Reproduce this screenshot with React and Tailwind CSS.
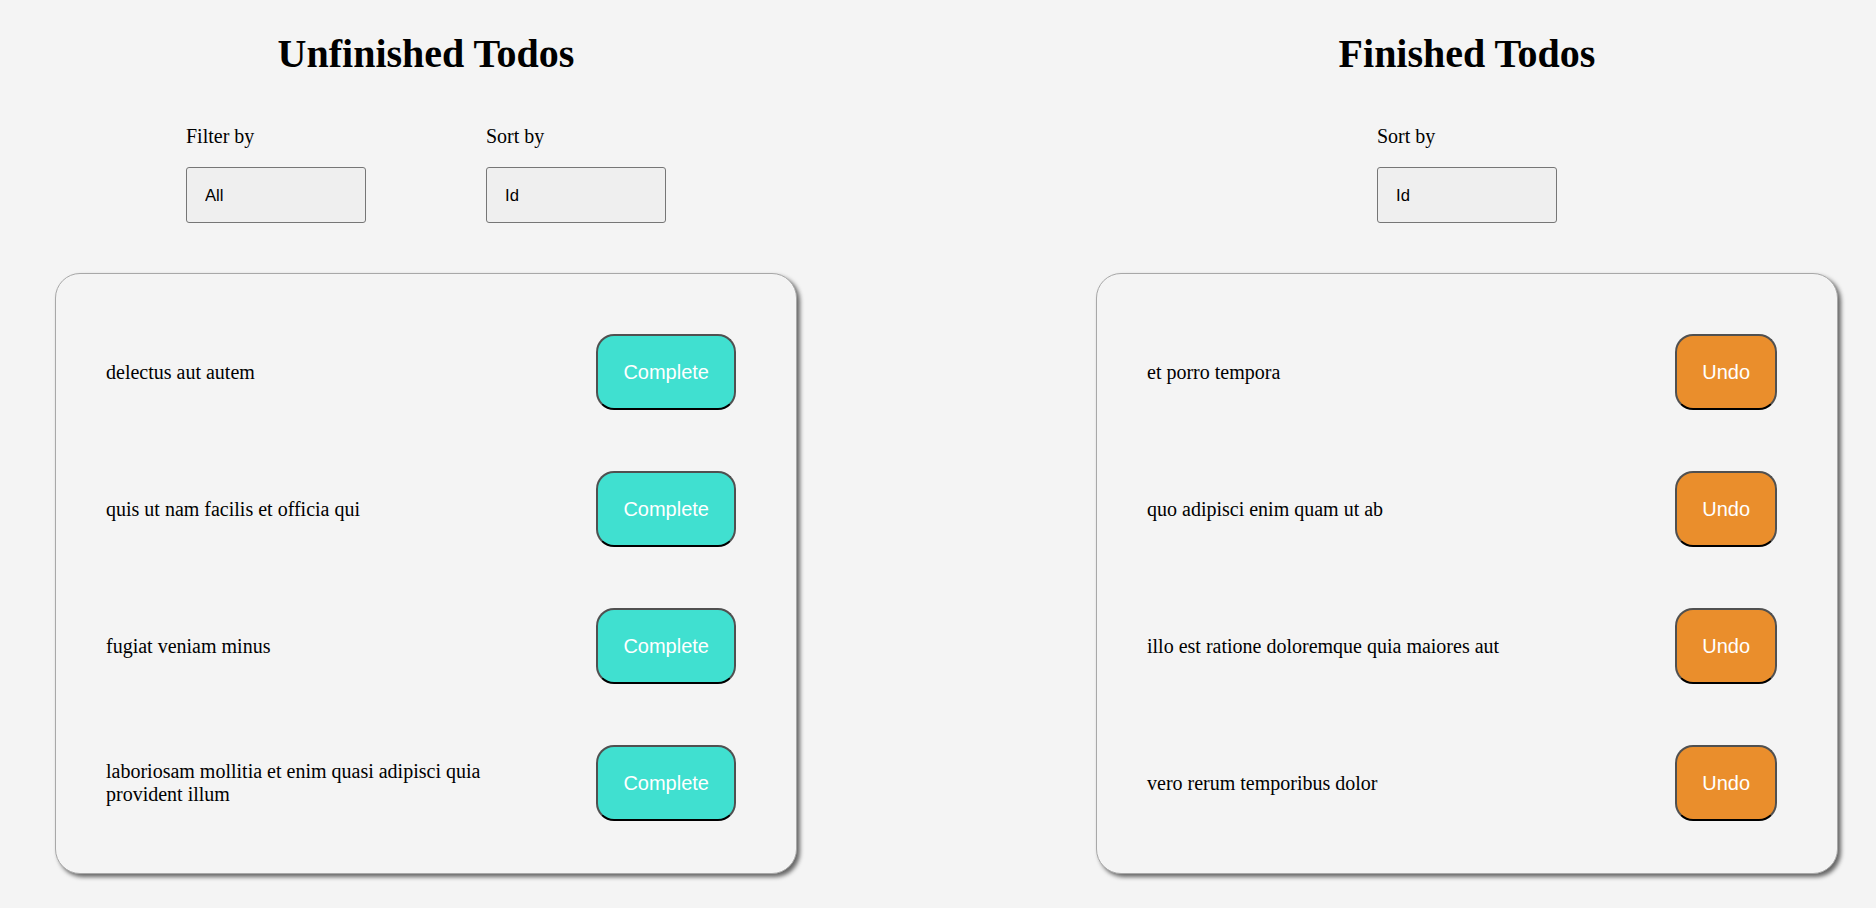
import React from "react";

const unfinished = [
  "delectus aut autem",
  "quis ut nam facilis et officia qui",
  "fugiat veniam minus",
  "laboriosam mollitia et enim quasi adipisci quia provident illum",
];

const finished = [
  "et porro tempora",
  "quo adipisci enim quam ut ab",
  "illo est ratione doloremque quia maiores aut",
  "vero rerum temporibus dolor",
];

function Select({ label, value }) {
  return (
    <div className="flex w-[180px] flex-col gap-[19px]">
      <label className="text-[20px] leading-[23px]">{label}</label>
      <select
        defaultValue={value}
        className="h-[56px] w-[180px] appearance-none rounded-[3px] border border-[#767676] bg-[#efefef] pl-[18px] text-[16.67px] text-black outline-none"
        style={{ fontFamily: '"Liberation Sans", Arial, sans-serif' }}
      >
        <option>{value}</option>
      </select>
    </div>
  );
}

function Row({ text, kind }) {
  const isUndo = kind === "undo";
  return (
    <div className="flex items-center justify-between">
      <p className="max-w-[420px] text-[20px] leading-[23px]">{text}</p>
      <button
        className={
          "flex h-[76px] items-center rounded-[18px] border-2 border-[#505050] border-b-black px-[25px] text-[20px] text-white " +
          (isUndo ? "bg-[#ea8e2c]" : "bg-[#40e0d0]")
        }
        style={{ fontFamily: '"Liberation Sans", Arial, sans-serif' }}
      >
        {isUndo ? "Undo" : "Complete"}
      </button>
    </div>
  );
}

function Column({ title, filters, items, kind }) {
  return (
    <div className="flex w-[742px] flex-col">
      <h1 className="text-center text-[40px] font-bold leading-[46px]">{title}</h1>
      <div className="mt-[48px] flex justify-center gap-[120px]">
        {filters.map((f) => (
          <Select key={f.label} label={f.label} value={f.value} />
        ))}
      </div>
      <div className="mt-[50px] flex flex-col gap-[61px] rounded-[25px] border border-[#a8a8a8] bg-[#f4f4f4] pb-[52px] pl-[50px] pr-[60px] pt-[60px] shadow-[3px_3px_4px_#666666]">
        {items.map((t) => (
          <Row key={t} text={t} kind={kind} />
        ))}
      </div>
    </div>
  );
}

export default function App() {
  return (
    <div
      className="flex min-h-[908px] gap-[299px] bg-[#f4f4f4] pl-[55px] pt-[31px] text-black"
      style={{ fontFamily: '"Liberation Serif", "Times New Roman", serif' }}
    >
      <Column
        title="Unfinished Todos"
        filters={[
          { label: "Filter by", value: "All" },
          { label: "Sort by", value: "Id" },
        ]}
        items={unfinished}
        kind="complete"
      />
      <Column
        title="Finished Todos"
        filters={[{ label: "Sort by", value: "Id" }]}
        items={finished}
        kind="undo"
      />
    </div>
  );
}
